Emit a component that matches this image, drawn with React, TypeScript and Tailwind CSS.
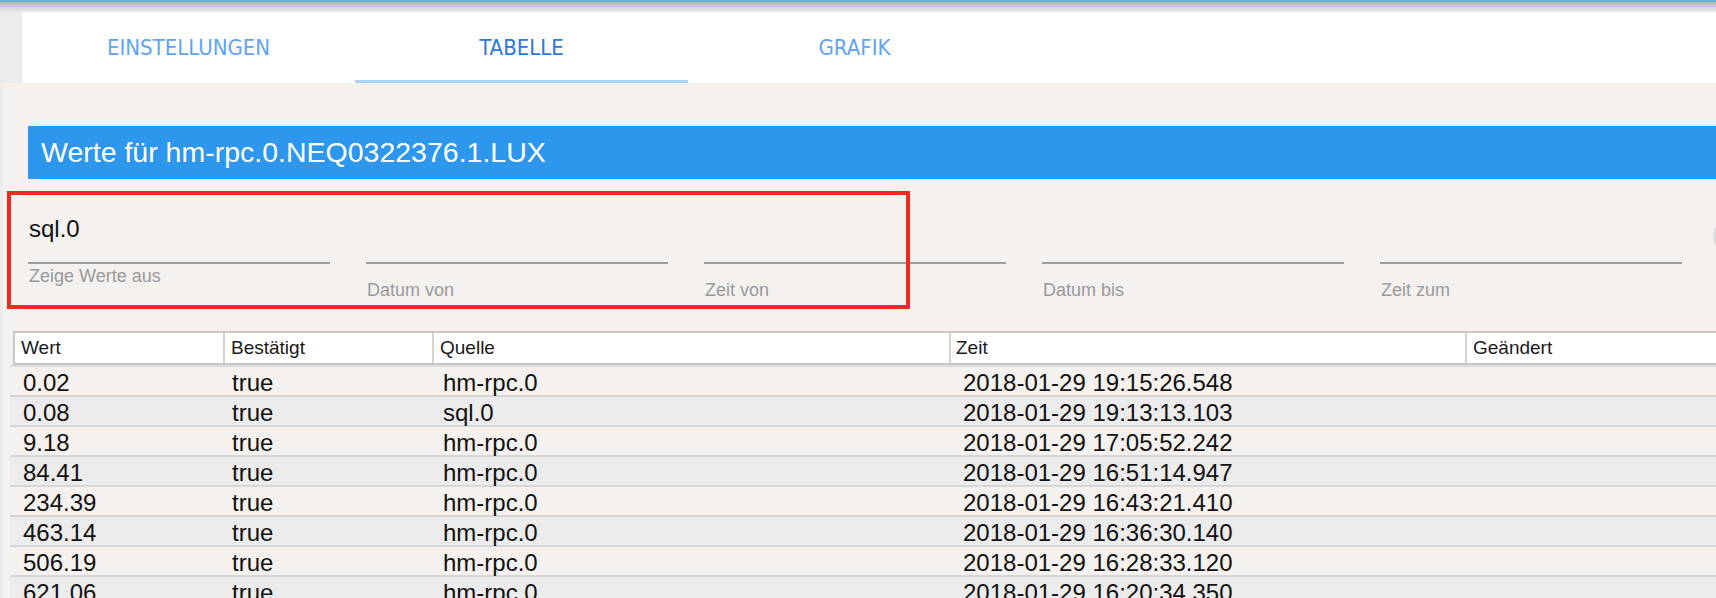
import React from "react";

const rows = [
  ["0.02", "true", "hm-rpc.0", "2018-01-29 19:15:26.548"],
  ["0.08", "true", "sql.0", "2018-01-29 19:13:13.103"],
  ["9.18", "true", "hm-rpc.0", "2018-01-29 17:05:52.242"],
  ["84.41", "true", "hm-rpc.0", "2018-01-29 16:51:14.947"],
  ["234.39", "true", "hm-rpc.0", "2018-01-29 16:43:21.410"],
  ["463.14", "true", "hm-rpc.0", "2018-01-29 16:36:30.140"],
  ["506.19", "true", "hm-rpc.0", "2018-01-29 16:28:33.120"],
  ["621.06", "true", "hm-rpc.0", "2018-01-29 16:20:34.350"],
];

function Field({ value, label, first }: { value?: string; label: string; first?: boolean }) {
  return (
    <div className="w-[302px] shrink-0 flex flex-col">
      <div className="h-[28px] leading-[28px] text-[24px] text-[#111] mb-[19px] pl-[1px]">{value ?? ""}</div>
      <div className="h-[2px] bg-[#9e9e9e]" />
      <div
        className={
          "text-[18px] leading-[22px] text-[#9a9a9a] pl-[1px] " + (first ? "mt-[1px]" : "mt-[15px]")
        }
      >
        {label}
      </div>
    </div>
  );
}

export default function App() {
  return (
    <div className="w-[1716px] h-[598px] overflow-hidden relative bg-[#ececec] font-['Liberation_Sans',Arial,sans-serif]">
      <div className="h-[2px] bg-[#63aeea]" />
      <div className="h-[10px] bg-linear-to-b from-[#b4b4b4] to-[#ececec]" />
      {/* Tabs */}
      <div className="ml-[22px] h-[71px] bg-white flex">
        {[
          { t: "EINSTELLUNGEN", a: false },
          { t: "TABELLE", a: true },
          { t: "GRAFIK", a: false },
        ].map((tab) => (
          <div
            key={tab.t}
            className={
              "relative w-[333px] h-full flex items-center justify-center text-[22px] font-['Liberation_Sans_Narrow','DejaVu_Sans_Condensed','Liberation_Sans',sans-serif] " +
              (tab.a ? "text-[#2a79de]" : "text-[#60a4f0]")
            }
          >
            <span className="pb-[1px]">{tab.t}</span>
            {tab.a && <div className="absolute left-0 right-0 bottom-0 h-[3px] bg-[#a9d6f7]" />}
          </div>
        ))}
      </div>
      {/* Content */}
      <div className="ml-[3px] bg-[#f4f1ee] h-[515px] relative pt-[43px]">
        <div className="ml-[25px] h-[53px] bg-[#2d97ee] flex items-center pl-[13px] text-white text-[28.5px] whitespace-nowrap">
          Werte für hm-rpc.0.NEQ0322376.1.LUX
        </div>
        {/* Filters */}
        <div className="h-[152px] flex gap-[36px] pl-[25px] pt-[36px]">
          <Field value="sql.0" label="Zeige Werte aus" first />
          <Field label="Datum von" />
          <Field label="Zeit von" />
          <Field label="Datum bis" />
          <Field label="Zeit zum" />
          <div className="ml-[-3px] w-[40px] h-[40px] shrink-0 rounded-full bg-[#e6e6e6] shadow-[0_1px_3px_rgba(0,0,0,0.35)]" />
        </div>
        {/* Annotation box */}
        <div className="absolute left-[4px] top-[108px] w-[903px] h-[118px] border-4 border-[#f02a1f] pointer-events-none" />
        {/* Table */}
        <div className="ml-[7px]">
          <div className="ml-[3px] h-[34px] bg-white border-y-2 border-l-2 border-[#c7c7c7] flex text-[19px] text-[#1a1a1a]">
            <div className="w-[208px] shrink-0 pl-[6px] leading-[30px]">Wert</div>
            <div className="w-[209px] shrink-0 border-l-2 border-[#d2d2d2] pl-[6px] leading-[30px]">Bestätigt</div>
            <div className="w-[517px] shrink-0 border-l-2 border-[#d2d2d2] pl-[6px] leading-[30px]">Quelle</div>
            <div className="w-[516px] shrink-0 border-l-2 border-[#d2d2d2] pl-[5px] leading-[30px]">Zeit</div>
            <div className="flex-1 border-l-2 border-[#d2d2d2] pl-[6px] leading-[30px]">Geändert</div>
          </div>
          <div className="h-[2px] bg-[#dedcda]" />
          {rows.map((r, i) => (
            <div
              key={i}
              className={
                "h-[30px] border-b-2 border-[#d6d6d6] flex text-[24px] text-[#111] " +
                (i % 2 === 0 ? "bg-[#f4f1ee]" : "bg-[#ececec]")
              }
            >
              <div className="w-[213px] shrink-0 pl-[13px] leading-[32px] h-[28px]">{r[0]}</div>
              <div className="w-[209px] shrink-0 pl-[9px] leading-[32px] h-[28px]">{r[1]}</div>
              <div className="w-[517px] shrink-0 pl-[11px] leading-[32px] h-[28px]">{r[2]}</div>
              <div className="w-[516px] shrink-0 pl-[14px] leading-[32px] h-[28px] whitespace-nowrap">{r[3]}</div>
              <div className="flex-1" />
            </div>
          ))}
        </div>
      </div>
    </div>
  );
}
